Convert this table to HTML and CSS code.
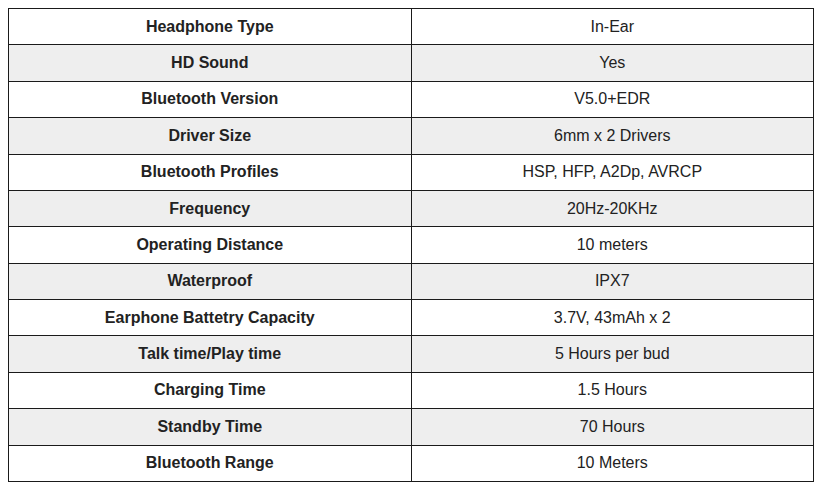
FILE: index.html
```html
<!DOCTYPE html>
<html>
<head>
<meta charset="utf-8">
<link rel="stylesheet" href="styles.css">
</head>
<body>
<table class="specs">
  <tbody>
    <tr><td class="label">Headphone Type</td><td class="value">In-Ear</td></tr>
    <tr><td class="label">HD Sound</td><td class="value">Yes</td></tr>
    <tr><td class="label">Bluetooth Version</td><td class="value">V5.0+EDR</td></tr>
    <tr><td class="label">Driver Size</td><td class="value">6mm x 2 Drivers</td></tr>
    <tr><td class="label">Bluetooth Profiles</td><td class="value">HSP, HFP, A2Dp, AVRCP</td></tr>
    <tr><td class="label">Frequency</td><td class="value">20Hz-20KHz</td></tr>
    <tr><td class="label">Operating Distance</td><td class="value">10 meters</td></tr>
    <tr><td class="label">Waterproof</td><td class="value">IPX7</td></tr>
    <tr><td class="label">Earphone Battetry Capacity</td><td class="value">3.7V, 43mAh x 2</td></tr>
    <tr><td class="label">Talk time/Play time</td><td class="value">5 Hours per bud</td></tr>
    <tr><td class="label">Charging Time</td><td class="value">1.5 Hours</td></tr>
    <tr><td class="label">Standby Time</td><td class="value">70 Hours</td></tr>
    <tr><td class="label">Bluetooth Range</td><td class="value">10 Meters</td></tr>
  </tbody>
</table>
</body>
</html>
```

FILE: styles.css
```css
html, body {
  margin: 0;
  padding: 0;
  background: #ffffff;
}
body {
  padding: 8px 10px 0 8px;
  font-family: "Liberation Sans", Arial, sans-serif;
  font-size: 16px;
  color: #222222;
}
.specs {
  width: 806px;
  height: 474px;
  border-collapse: collapse;
  table-layout: fixed;
}
.specs td {
  border: 1px solid #1a1a1a;
  text-align: center;
  vertical-align: middle;
  padding: 0 4px;
  width: 50%;
}
.specs tr:nth-child(even) td {
  background: #eeeeee;
}
.label {
  font-weight: bold;
}
```
